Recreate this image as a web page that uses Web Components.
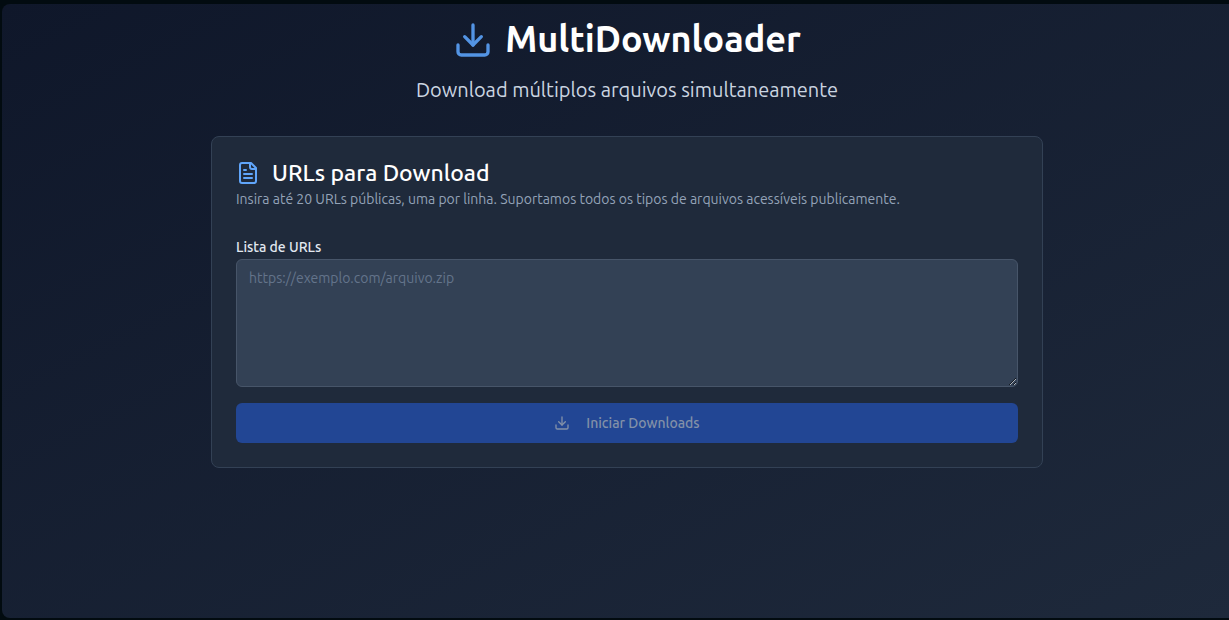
<!DOCTYPE html>
<html lang="pt-BR">
<head>
<meta charset="utf-8">
<meta name="viewport" content="width=device-width, initial-scale=1">
<title>MultiDownloader</title>
<style>
  html { height: 100%; background: #020b10; }
  body {
    margin: 0; min-height: 100%; box-sizing: border-box; padding: 4px 0 2px 2px;
    display: flex;
    font-family: Ubuntu, "Noto Sans", sans-serif; color: #fff;
  }
</style>
</head>
<body>
<app-shell>
  <app-header slot="header">
    <ui-icon slot="icon" name="download"></ui-icon>
    <span slot="title">MultiDownloader</span>
    <span slot="subtitle">Download múltiplos arquivos simultaneamente</span>
  </app-header>
  <ui-card>
    <ui-icon slot="icon" name="file-text"></ui-icon>
    <span slot="title">URLs para Download</span>
    <span slot="description">Insira até 20 URLs públicas, uma por linha. Suportamos todos os tipos de arquivos acessíveis publicamente.</span>
    <url-form></url-form>
  </ui-card>
</app-shell>
<script>
const ICONS = {
  download: '<path d="M21 15v4a2 2 0 0 1-2 2H5a2 2 0 0 1-2-2v-4"/><polyline points="7 10 12 15 17 10"/><line x1="12" y1="15" x2="12" y2="3"/>',
  'file-text': '<path d="M15 2H6a2 2 0 0 0-2 2v16a2 2 0 0 0 2 2h12a2 2 0 0 0 2-2V7Z"/><path d="M14 2v4a2 2 0 0 0 2 2h4"/><path d="M10 9H8"/><path d="M16 13H8"/><path d="M16 17H8"/>'
};

class UiIcon extends HTMLElement {
  connectedCallback() {
    if (this.shadowRoot) return;
    this.attachShadow({ mode: 'open' }).innerHTML = `
      <style>
        :host { display: block; flex: none; width: 24px; height: 24px; }
        svg { display: block; width: 100%; height: 100%; }
      </style>
      <svg viewBox="0 0 24 24" fill="none" stroke="currentColor" stroke-width="2"
        stroke-linecap="round" stroke-linejoin="round" aria-hidden="true">${ICONS[this.getAttribute('name')]}</svg>`;
  }
}

class AppShell extends HTMLElement {
  constructor() {
    super();
    this.attachShadow({ mode: 'open' }).innerHTML = `
      <style>
        :host {
          display: block; flex: 1; min-width: 0; box-sizing: border-box;
          padding: 12px 0 32px 23px; border-radius: 8px 0 0 8px;
          background: linear-gradient(to bottom right, #0f172a, #1e293b);
        }
        main { max-width: 832px; margin: 0 auto; }
      </style>
      <main><slot name="header"></slot><slot></slot></main>`;
  }
}

class AppHeader extends HTMLElement {
  constructor() {
    super();
    this.attachShadow({ mode: 'open' }).innerHTML = `
      <style>
        :host { display: block; margin-bottom: 32px; text-align: center; }
        .brand { display: flex; align-items: center; justify-content: center; gap: 12px; height: 48px; }
        ::slotted(ui-icon) { width: 40px; height: 40px; color: #5394e4; }
        h1 { margin: 0; padding-bottom: 2px; font-size: 36px; line-height: 40px; font-weight: 700; }
        p { margin: 12px 0 0; font-size: 20px; line-height: 28px; color: #cbd5e1; }
      </style>
      <header>
        <div class="brand"><slot name="icon"></slot><h1><slot name="title"></slot></h1></div>
        <p><slot name="subtitle"></slot></p>
      </header>`;
  }
}

class UiCard extends HTMLElement {
  constructor() {
    super();
    this.attachShadow({ mode: 'open' }).innerHTML = `
      <style>
        :host {
          display: block; box-sizing: border-box; padding: 24px;
          border: 1px solid #334155; border-radius: 8px; background: #1f2a3b;
        }
        .title { display: flex; align-items: center; gap: 12px; height: 24px; }
        ::slotted(ui-icon) { color: #60a5fa; }
        h2 { margin: 0; font-size: 23px; line-height: 24px; font-weight: 500; }
        p { margin: 4px 0 28px; font-size: 14px; line-height: 20px; color: #94a3b8; }
      </style>
      <section>
        <div class="title"><slot name="icon"></slot><h2><slot name="title"></slot></h2></div>
        <p><slot name="description"></slot></p>
        <slot></slot>
      </section>`;
  }
}

class UrlForm extends HTMLElement {
  constructor() {
    super();
    this.attachShadow({ mode: 'open' }).innerHTML = `
      <style>
        :host { display: block; }
        form { display: flex; flex-direction: column; }
        label { font-size: 14px; line-height: 20px; font-weight: 500; color: #e2e8f0; margin-bottom: 2px; }
        textarea {
          display: block; box-sizing: border-box; width: 100%; height: 128px; margin: 0 0 16px;
          padding: 8px 12px; border: 1px solid #475569; border-radius: 6px;
          background: #334155; color: #fff; font: inherit; font-size: 14px; line-height: 20px;
          outline: 0; resize: vertical;
        }
        textarea::placeholder { color: #64748b; opacity: 1; }
        button {
          display: flex; align-items: center; justify-content: center; gap: 16px;
          height: 40px; padding: 0 16px; border: 0; border-radius: 6px;
          background: #224694; color: #8391a8; font: inherit; font-size: 14px; line-height: 20px; font-weight: 500;
        }
        ui-icon { width: 16px; height: 16px; }
      </style>
      <form>
        <label for="urls">Lista de URLs</label>
        <textarea id="urls" placeholder="https://exemplo.com/arquivo.zip"></textarea>
        <button type="submit" disabled><ui-icon name="download"></ui-icon>Iniciar Downloads</button>
      </form>`;
  }
}

customElements.define('ui-icon', UiIcon);
customElements.define('app-shell', AppShell);
customElements.define('app-header', AppHeader);
customElements.define('ui-card', UiCard);
customElements.define('url-form', UrlForm);
</script>
</body>
</html>
